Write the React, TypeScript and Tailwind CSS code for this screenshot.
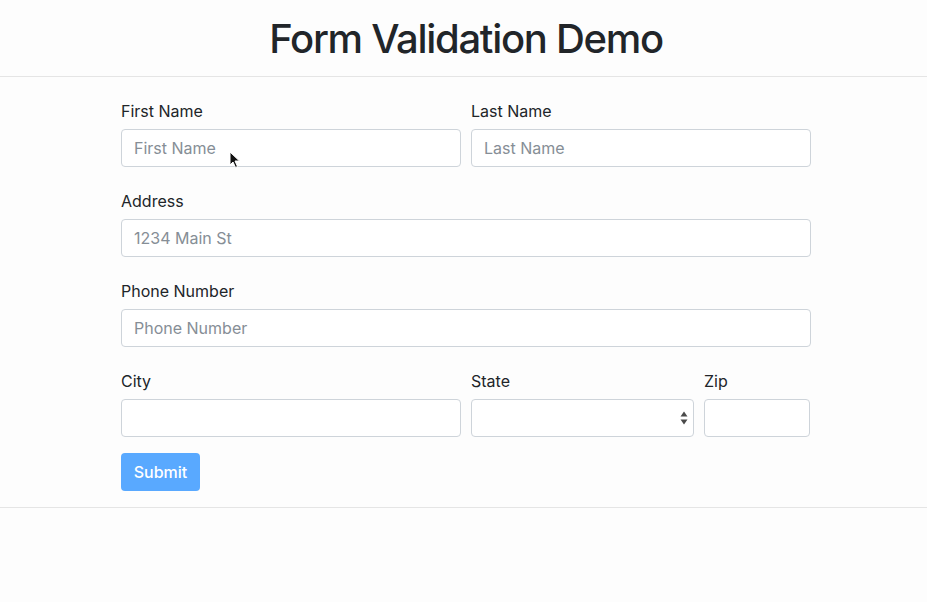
import React from "react";

const font = { fontFamily: "Inter, 'Liberation Sans', sans-serif" };

function Field({
  label,
  placeholder,
  className = "",
}: {
  label: string;
  placeholder?: string;
  className?: string;
}) {
  return (
    <div className={`flex flex-col ${className}`}>
      <label className="text-[16px] leading-6 text-[#212529] mb-[6px]">{label}</label>
      <input
        placeholder={placeholder}
        className="h-[38px] w-full rounded-[4px] border border-[#ced4da] bg-white px-3 text-[16px] text-[#495057] placeholder:text-[#868e96] outline-none"
      />
    </div>
  );
}

function StateSelect() {
  return (
    <div className="flex flex-col w-[223px]">
      <label className="text-[16px] leading-6 text-[#212529] mb-[6px]">State</label>
      <div className="relative h-[38px] rounded-[4px] border border-[#ced4da] bg-white">
        {/* up/down arrows */}
        <svg
          className="absolute right-[4px] top-[10px]"
          width="10"
          height="16"
          viewBox="0 0 10 16"
        >
          <path d="M1.5 6.5 L5 1.5 L8.5 6.5 Z" fill="#4a4a4a" />
          <path d="M1.5 9.5 L5 14.5 L8.5 9.5 Z" fill="#4a4a4a" />
        </svg>
      </div>
    </div>
  );
}

export default function App() {
  return (
    <div className="min-h-screen bg-[#fdfdfd] relative" style={font}>
      <header className="h-[77px] pl-[5px] flex items-start justify-center border-b border-[#e5e5e5]">
        <h1 className="mt-[15px] text-[40px] leading-[48px] font-medium text-[#212529] tracking-[-1.3px]">
          Form Validation Demo
        </h1>
      </header>

      <div className="pl-[5px] border-b border-[#e5e5e5]">
        <form className="w-[690px] mx-auto pt-[22px] pb-[16px]">
          <div className="flex gap-[10px] mb-[22px]">
            <Field label="First Name" placeholder="First Name" className="w-[340px]" />
            <Field label="Last Name" placeholder="Last Name" className="w-[340px]" />
          </div>
          <Field label="Address" placeholder="1234 Main St" className="mb-[22px]" />
          <Field label="Phone Number" placeholder="Phone Number" className="mb-[22px]" />
          <div className="flex gap-[10px] mb-[16px]">
            <Field label="City" className="w-[340px]" />
            <StateSelect />
            <Field label="Zip" className="w-[106px]" />
          </div>
          <button
            type="button"
            className="h-[38px] w-[79px] rounded-[4px] bg-[#59a9ff] text-white text-[16px] font-medium"
          >
            Submit
          </button>
        </form>
      </div>

      {/* mouse cursor */}
      <svg
        className="absolute left-[229px] top-[151px]"
        width="12"
        height="18"
        viewBox="0 0 12 18"
      >
        <path
          d="M1 1 L1 14 L4 11 L6.5 16.5 L8.5 15.5 L6 10 L10.5 10 Z"
          fill="#111"
          stroke="#fff"
          strokeWidth="1"
        />
      </svg>
    </div>
  );
}
